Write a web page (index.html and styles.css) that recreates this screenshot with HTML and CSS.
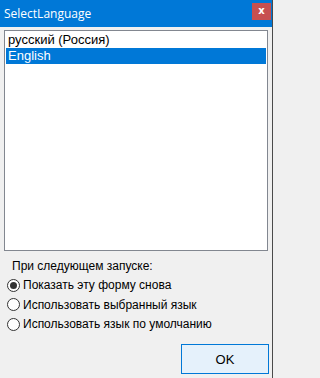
FILE: index.html
```html
<!DOCTYPE html>
<html>
<head>
<meta charset="utf-8">
<link rel="stylesheet" href="styles.css">
</head>
<body>
<div class="window">
  <div class="titlebar">
    <span class="title">SelectLanguage</span>
    <span class="close">x</span>
  </div>
  <div class="content">
    <div class="listbox">
      <div class="item">русский (Россия)</div>
      <div class="item selected">English</div>
    </div>
    <div class="group-label">При следующем запуске:</div>
    <div class="radios">
      <label class="radio"><span class="dot checked"></span>Показать эту форму снова</label>
      <label class="radio"><span class="dot"></span>Использовать выбранный язык</label>
      <label class="radio"><span class="dot"></span>Использовать язык по умолчанию</label>
    </div>
    <div class="actions">
      <button class="ok">OK</button>
    </div>
  </div>
</div>
</body>
</html>
```

FILE: styles.css
```css
html, body {
  margin: 0;
  padding: 0;
  background: #f0f0f0;
}
.window {
  width: 272px;
  height: 378px;
  border-right: 1px solid #4a4a4a;
  display: flex;
  flex-direction: column;
  background: #f0f0f0;
  font-family: "Liberation Sans", Arial, sans-serif;
}
.titlebar {
  height: 27px;
  background: #0078d7;
  display: flex;
  justify-content: space-between;
  align-items: flex-start;
  color: #fff;
}
.title {
  font-family: "Open Sans", "Noto Sans", sans-serif;
  font-size: 12px;
  line-height: 27px;
  padding-left: 4px;
}
.close {
  width: 19px;
  height: 17px;
  margin-top: 3px;
  margin-right: 1px;
  background: #c75050;
  color: #fff;
  font-family: "DejaVu Sans", sans-serif;
  font-weight: bold;
  font-size: 10px;
  line-height: 16px;
  text-align: center;
}
.content {
  padding: 3px 0 0 4px;
  display: flex;
  flex-direction: column;
}
.listbox {
  height: 218px;
  border: 1px solid #828790;
  background: #fff;
  padding: 1px 0 0 1px;
  box-sizing: content-box;
  width: 261px;
}
.item {
  height: 16px;
  line-height: 16px;
  font-size: 13px;
  color: #000;
  padding-left: 2px;
  margin-right: 1px;
}
.item.selected {
  background: #0078d7;
  color: #fff;
}
.group-label {
  font-size: 12px;
  color: #000;
  margin: 8px 0 0 8px;
  line-height: 14px;
}
.radios {
  margin-top: 5px;
  display: flex;
  flex-direction: column;
  gap: 5.5px;
}
.radio {
  display: flex;
  align-items: center;
  font-size: 12px;
  line-height: 14px;
  color: #000;
  padding-left: 3px;
}
.dot {
  width: 11px;
  height: 11px;
  border: 1px solid #333;
  border-radius: 50%;
  background: #fff;
  margin-right: 3px;
  display: flex;
  align-items: center;
  justify-content: center;
}
.dot.checked::after {
  content: "";
  width: 7px;
  height: 7px;
  border-radius: 50%;
  background: #333;
}
.actions {
  display: flex;
  justify-content: flex-end;
  margin-top: 13px;
  padding-right: 3px;
}
.ok {
  width: 88px;
  height: 30px;
  border: 1px solid #0078d7;
  background: #e5f1fb;
  font-family: "Liberation Sans", Arial, sans-serif;
  font-size: 13px;
  color: #000;
  padding: 0;
}
```
